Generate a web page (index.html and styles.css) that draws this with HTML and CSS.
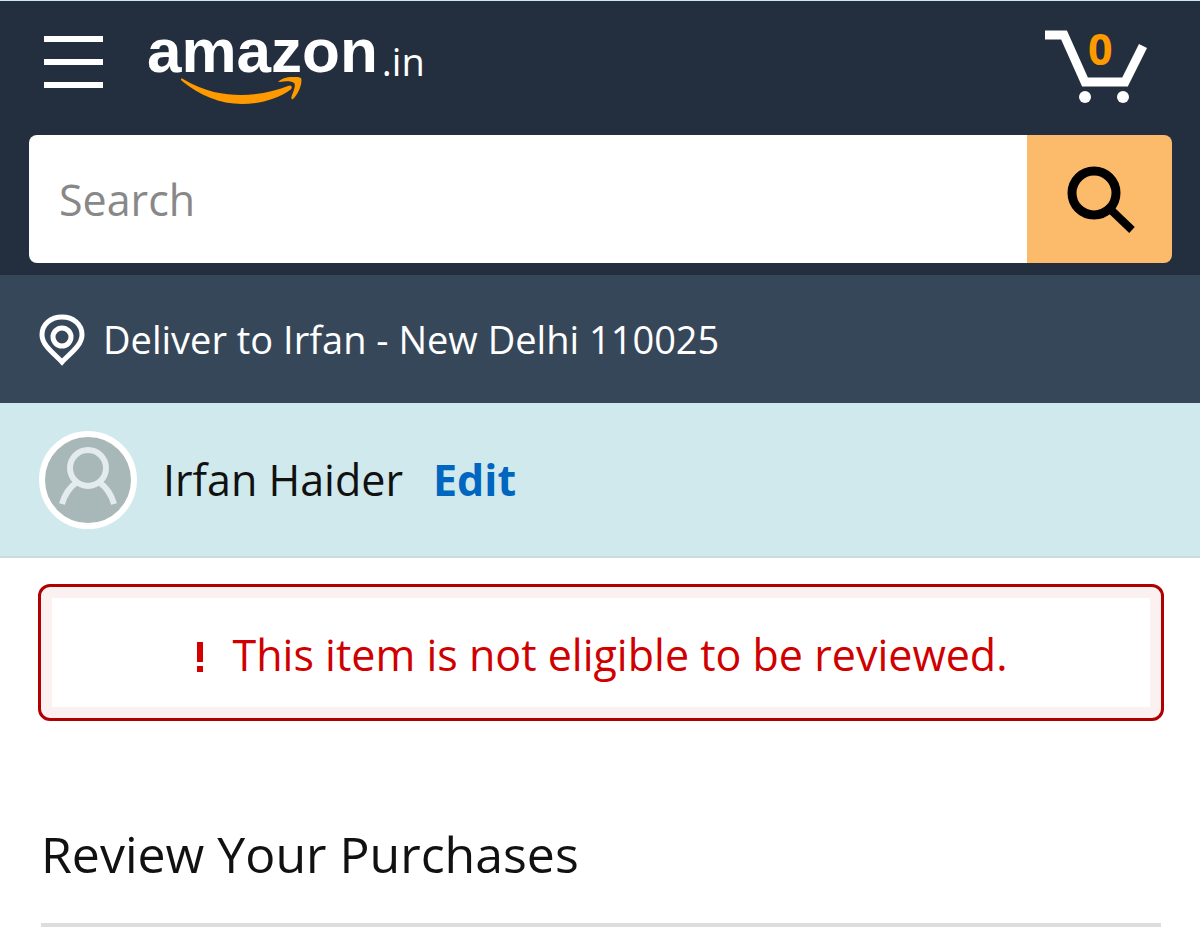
FILE: index.html
```html
<!DOCTYPE html>
<html lang="en">
<head>
    <meta charset="UTF-8">
    <meta name="viewport" content="width=device-width, initial-scale=1.0">
    <title>Review Your Purchases</title>
    <link rel="stylesheet" href="styles.css">
</head>
<body>
    <header class="header">
        <div class="nav-row">
            <button type="button" class="menu-btn" aria-label="Menu">
                <span class="menu-bar"></span>
                <span class="menu-bar"></span>
                <span class="menu-bar"></span>
            </button>
            <a href="#" class="logo">
                <span class="logo-main">
                    <span class="logo-word">amazon</span>
                    <svg class="logo-smile" width="122" height="28" viewBox="0 0 122 28" aria-hidden="true">
                        <path fill="#ff9900" d="M2 2 C24 15 43 18 60 18 C78 18 94 14 107 9 C111 7 112 11 109 13 C97 22 78 27 61 27 C39 27 18 18 1 4 C-1 2 0 1 2 2 Z"/>
                        <path fill="#ff9900" d="M98 4 C104 -1 117 -1 120 1 C122 6 117 18 112 22 C110 23 110 21 111 18 C113 13 115 8 113 6 C111 4 104 4 99 5 C97 5 97 4 98 4 Z"/>
                    </svg>
                </span>
                <span class="logo-tld">.in</span>
            </a>
            <a href="#" class="cart" aria-label="Cart">
                <svg width="104" height="76" viewBox="0 0 104 76" aria-hidden="true">
                    <path d="M1 6 H20 L41 53 H81 L99 17" fill="none" stroke="#fff" stroke-width="9"/>
                    <circle cx="41" cy="68" r="6" fill="#fff"/>
                    <circle cx="79" cy="68" r="6" fill="#fff"/>
                </svg>
                <span class="cart-count">0</span>
            </a>
        </div>
        <form class="search">
            <input type="text" class="search-input" placeholder="Search" aria-label="Search">
            <button type="button" class="search-btn" aria-label="Go">
                <svg width="70" height="68" viewBox="0 0 70 68" aria-hidden="true">
                    <circle cx="29" cy="28" r="22" fill="none" stroke="#000" stroke-width="9"/>
                    <path d="M44 43 L67 65" stroke="#000" stroke-width="8"/>
                </svg>
            </button>
        </form>
    </header>

    <a href="#" class="deliver">
        <svg width="46" height="54" viewBox="0 0 46 54" aria-hidden="true">
            <path d="M23 50 C17 43 3 34 3 23 C3 12 12 5 23 5 C34 5 43 12 43 23 C43 34 29 43 23 50 Z" fill="none" stroke="#fff" stroke-width="5"/>
            <circle cx="23" cy="25" r="9" fill="none" stroke="#fff" stroke-width="5"/>
        </svg>
        <span>Deliver to Irfan - New Delhi 110025</span>
    </a>

    <section class="profile">
        <svg class="avatar" width="98" height="98" viewBox="0 0 98 98" aria-hidden="true">
            <circle cx="49" cy="49" r="46" fill="#a8b8b8" stroke="#fff" stroke-width="6"/>
            <g fill="none" stroke="#e4ebee" stroke-width="6">
                <circle cx="49" cy="37" r="18"/>
                <path d="M23 73 C26 62 31 56 38 51 M60 51 C67 56 72 62 75 73"/>
            </g>
        </svg>
        <span class="profile-name">Irfan Haider</span>
        <a href="#" class="profile-edit">Edit</a>
    </section>

    <main class="content">
        <div class="alert" role="alert">
            <svg width="10" height="36" viewBox="0 0 10 36" aria-hidden="true">
                <path fill="#d40000" d="M2 5 H8 V25 H2 Z M2 29 H8 V35 H2 Z"/>
            </svg>
            <span>This item is not eligible to be reviewed.</span>
        </div>
        <h1 class="title">Review Your Purchases</h1>
        <hr class="divider">
    </main>
</body>
</html>
```

FILE: styles.css
```css
* {
    box-sizing: border-box;
}
body {
    margin: 0;
    font-family: "Open Sans", "Noto Sans", sans-serif;
    color: #111;
    background: #fff;
}
a {
    text-decoration: none;
}
svg {
    display: block;
    flex-shrink: 0;
}
.header {
    padding: 0 28px 12px 29px;
    border-top: 1px solid #cfe9ec;
    background: #232f3e;
}
.nav-row {
    display: flex;
    align-items: flex-start;
    height: 134px;
    padding: 28px 24px 0 15px;
}
.menu-btn {
    display: flex;
    flex-direction: column;
    gap: 17px;
    margin-top: 7px;
    padding: 0;
    border: none;
    background: none;
    cursor: pointer;
}
.menu-bar {
    width: 59px;
    height: 6px;
    background: #fff;
}
.logo {
    display: flex;
    align-items: flex-start;
    gap: 4px;
    margin-left: 44px;
    color: #fff;
}
.logo-main {
    display: flex;
    flex-direction: column;
    gap: 4px;
}
.logo-word {
    font-family: "Liberation Sans", Arial, sans-serif;
    font-size: 62px;
    font-weight: bold;
    line-height: 44px;
}
.logo-smile {
    margin-left: 34px;
}
.logo-tld {
    font-size: 38px;
    line-height: 64px;
}
.cart {
    position: relative;
    margin-left: auto;
}
.cart-count {
    position: absolute;
    top: 0;
    left: 44px;
    font-size: 43px;
    font-weight: bold;
    line-height: 40px;
    color: #ff9900;
}
.search {
    display: flex;
    height: 128px;
    border-radius: 8px;
    overflow: hidden;
}
.search-input {
    flex: 1;
    min-width: 0;
    padding: 0 30px;
    border: none;
    font-family: inherit;
    font-size: 43px;
    color: #111;
    background: #fff;
}
.search-input::placeholder {
    color: #888;
}
.search-btn {
    display: flex;
    align-items: center;
    justify-content: center;
    width: 145px;
    border: none;
    background: #fcbb6a;
    cursor: pointer;
}
.deliver {
    display: flex;
    align-items: center;
    gap: 18px;
    height: 128px;
    padding: 0 39px;
    font-size: 38px;
    color: #fff;
    background: #37475a;
}
.profile {
    display: flex;
    align-items: center;
    height: 155px;
    padding: 0 39px;
    border-bottom: 2px solid #c9dcde;
    font-size: 43px;
    background: #cfe9ec;
}
.profile-name {
    margin-left: 26px;
}
.profile-edit {
    margin-left: 30px;
    font-weight: bold;
    color: #0066c0;
}
.content {
    padding: 26px 36px 14px 38px;
}
.alert {
    display: flex;
    align-items: center;
    justify-content: center;
    gap: 28px;
    height: 137px;
    padding-top: 4px;
    border: 3px solid #b10000;
    border-radius: 12px;
    box-shadow: inset 0 0 0 11px #fcf1f1;
    font-size: 43px;
    color: #d00000;
}
.title {
    margin: 97px 3px 33px;
    font-size: 50px;
    font-weight: normal;
    line-height: 72px;
}
.divider {
    height: 4px;
    margin: 0 3px;
    border: none;
    background: #ddd;
}
```
